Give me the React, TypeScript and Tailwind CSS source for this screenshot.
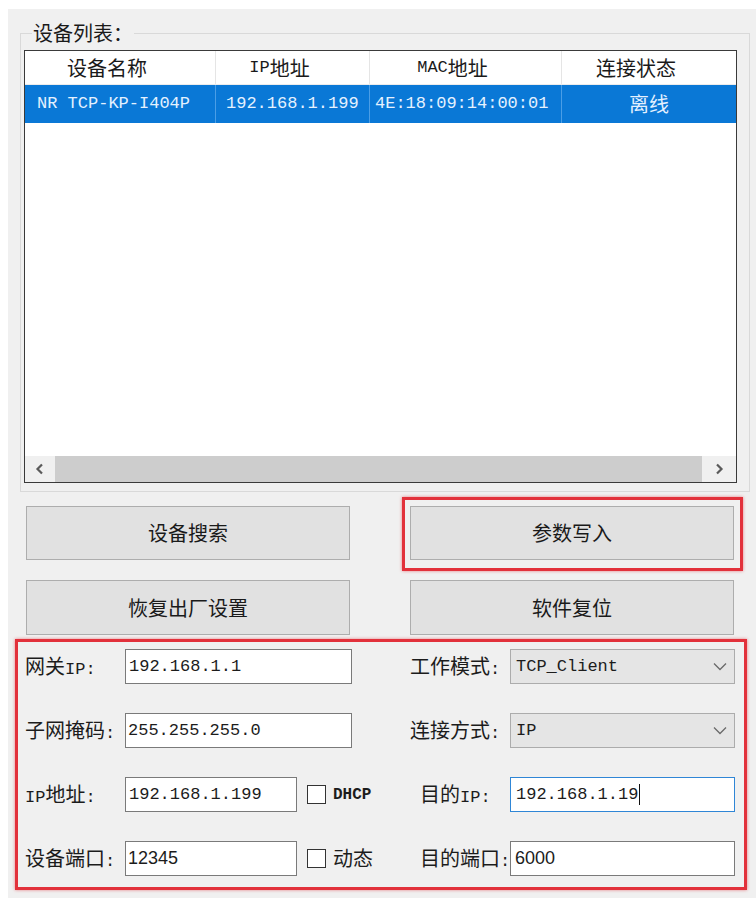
import React from "react";

function C({ children }: { children: React.ReactNode }) {
  return <span className="font-['Noto_Sans_CJK_SC',sans-serif] text-[20px]">{children}</span>;
}

function Chevron({ dir }: { dir: "left" | "right" }) {
  return (
    <svg width="10" height="12" viewBox="0 0 10 12">
      {dir === "left" ? (
        <polyline points="7,1.5 2.5,6 7,10.5" fill="none" stroke="#5a5a5a" strokeWidth="2.2" />
      ) : (
        <polyline points="3,1.5 7.5,6 3,10.5" fill="none" stroke="#5a5a5a" strokeWidth="2.2" />
      )}
    </svg>
  );
}

function Down() {
  return (
    <svg width="14" height="9" viewBox="0 0 14 9">
      <polyline points="1,1.5 7,7.5 13,1.5" fill="none" stroke="#6a6a6a" strokeWidth="1.3" />
    </svg>
  );
}

function Btn({ children }: { children: React.ReactNode }) {
  return (
    <div className="h-full w-full bg-[#e1e1e1] border border-[#adadad] flex items-center justify-center text-[#1a1a1a]">
      {children}
    </div>
  );
}

function TextBox({ w, children, focus }: { w: string; children: React.ReactNode; focus?: boolean }) {
  return (
    <div
      className={
        "h-[35px] bg-white border flex items-center " +
        w +
        (focus ? " border-[#2f86d6]" : " border-[#7a7a7a]")
      }
    >
      {children}
    </div>
  );
}

function Check() {
  return <div className="w-[19px] h-[19px] border border-[#333333] bg-white" />;
}

function Combo({ children }: { children: React.ReactNode }) {
  return (
    <div className="h-[35px] w-[225px] bg-[#e5e5e5] border border-[#acacac] flex items-center justify-between pl-[5px] pr-[7px]">
      <span className="leading-none">{children}</span>
      <Down />
    </div>
  );
}

export default function App() {
  return (
    <div className="w-[756px] h-[898px] bg-[#f0f0f0] border-l-[8px] border-t-[9px] border-white font-['Liberation_Mono','Noto_Sans_CJK_SC',monospace] text-[17px] text-[#1c1c1c] overflow-hidden">
      <fieldset className="ml-[12px] mt-[11px] w-[730px] border border-[#d9d9d9] px-[3px] pb-[8px]">
        <legend className="ml-[8px] px-[1px] h-[26px] leading-[26px] text-[20px] font-['Noto_Sans_CJK_SC',sans-serif] text-[#1a1a1a]">
          设备列表：
        </legend>
        <div className="mt-[4px] w-[713px] h-[433px] border border-[#3a3a3a] bg-white flex flex-col">
          <div className="flex h-[34px] border-b border-[#ececec] text-[#1a1a1a] shrink-0">
            <div className="w-[191px] border-r border-[#e5e5e5] flex items-center justify-center pr-[26px]">
              <C>设备名称</C>
            </div>
            <div className="w-[154px] border-r border-[#e5e5e5] flex items-center justify-center pr-[26px]">
              <span>IP</span>
              <C>地址</C>
            </div>
            <div className="w-[192px] border-r border-[#e5e5e5] flex items-center justify-center pr-[26px]">
              <span>MAC</span>
              <C>地址</C>
            </div>
            <div className="flex-1 flex items-center justify-center pr-[26px]">
              <C>连接状态</C>
            </div>
          </div>
          <div className="flex h-[38px] bg-[#0a78d6] text-[#e4f1ff] shrink-0">
            <div className="w-[191px] border-r border-[#4b9ee6] flex items-center pl-[12px] whitespace-nowrap">
              NR TCP-KP-I404P
            </div>
            <div className="w-[154px] border-r border-[#4b9ee6] flex items-center pl-[10px] whitespace-nowrap">
              192.168.1.199
            </div>
            <div className="w-[192px] border-r border-[#4b9ee6] flex items-center pl-[5px] whitespace-nowrap">
              4E:18:09:14:00:01
            </div>
            <div className="flex-1 flex items-center justify-center">
              <C>离线</C>
            </div>
          </div>
          <div className="flex-1" />
          <div className="h-[26px] flex shrink-0">
            <div className="w-[30px] bg-[#f0f0f0] flex items-center justify-center">
              <Chevron dir="left" />
            </div>
            <div className="flex-1 bg-[#cdcdcd]" />
            <div className="w-[34px] bg-[#f0f0f0] flex items-center justify-center">
              <Chevron dir="right" />
            </div>
          </div>
        </div>
      </fieldset>

      <div className="ml-[18px] mt-[14px] grid grid-cols-[324px_324px] grid-rows-[54px_55px] gap-x-[60px] gap-y-[20px]">
        <Btn>
          <C>设备搜索</C>
        </Btn>
        <div className="relative">
          <Btn>
            <C>参数写入</C>
          </Btn>
          <div className="absolute -left-[8px] -top-[9px] -right-[9px] -bottom-[11px] border-[3px] border-[#e2313b] shadow-[0_0_3px_rgba(226,49,59,0.6)] pointer-events-none" />
        </div>
        <Btn>
          <C>恢复出厂设置</C>
        </Btn>
        <Btn>
          <C>软件复位</C>
        </Btn>
      </div>

      <div className="ml-[7px] mt-[4px] w-[732px] h-[251px] border-[3px] border-[#e2313b] shadow-[0_0_3px_rgba(226,49,59,0.6)] pt-[7px] pl-[7px] flex flex-col gap-[29px]">
        <div className="flex items-center h-[35px]">
          <div className="w-[385px] flex items-center">
            <div className="w-[100px] whitespace-nowrap">
              <C>网关</C>IP:
            </div>
            <TextBox w="w-[227px]">
              <span className="pl-[3px]">192.168.1.1</span>
            </TextBox>
          </div>
          <div className="flex items-center">
            <div className="w-[100px] whitespace-nowrap">
              <C>工作模式</C>:
            </div>
            <Combo>TCP_Client</Combo>
          </div>
        </div>

        <div className="flex items-center h-[35px]">
          <div className="w-[385px] flex items-center">
            <div className="w-[100px] whitespace-nowrap">
              <C>子网掩码</C>:
            </div>
            <TextBox w="w-[227px]">
              <span className="pl-[2px]">255.255.255.0</span>
            </TextBox>
          </div>
          <div className="flex items-center">
            <div className="w-[100px] whitespace-nowrap">
              <C>连接方式</C>:
            </div>
            <Combo>IP</Combo>
          </div>
        </div>

        <div className="flex items-center h-[35px]">
          <div className="w-[385px] flex items-center">
            <div className="w-[100px] whitespace-nowrap">
              IP<C>地址</C>:
            </div>
            <TextBox w="w-[172px]">
              <span className="pl-[3px]">192.168.1.199</span>
            </TextBox>
            <div className="ml-[10px]">
              <Check />
            </div>
            <span className="ml-[7px] font-bold text-[16px]">DHCP</span>
          </div>
          <div className="flex items-center">
            <div className="w-[100px] whitespace-nowrap pl-[10px]">
              <C>目的</C>IP:
            </div>
            <TextBox w="w-[225px]" focus>
              <span className="pl-[5px]">192.168.1.19</span>
              <span className="w-[1px] h-[21px] bg-[#111111] ml-[1px]" />
            </TextBox>
          </div>
        </div>

        <div className="flex items-center h-[35px]">
          <div className="w-[385px] flex items-center">
            <div className="w-[100px] whitespace-nowrap">
              <C>设备端口</C>:
            </div>
            <TextBox w="w-[172px]">
              <span className="pl-[2px] font-['Liberation_Sans',sans-serif] text-[18px]">12345</span>
            </TextBox>
            <div className="ml-[10px]">
              <Check />
            </div>
            <span className="ml-[7px]">
              <C>动态</C>
            </span>
          </div>
          <div className="flex items-center">
            <div className="w-[100px] whitespace-nowrap pl-[10px]">
              <C>目的端口</C>:
            </div>
            <TextBox w="w-[225px]">
              <span className="pl-[4px] font-['Liberation_Sans',sans-serif] text-[18px]">6000</span>
            </TextBox>
          </div>
        </div>
      </div>
    </div>
  );
}
